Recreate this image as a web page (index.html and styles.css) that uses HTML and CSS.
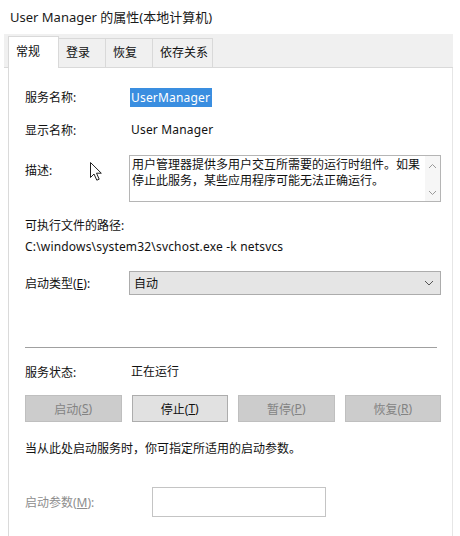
FILE: index.html
```html
<!DOCTYPE html>
<html lang="zh-CN">
<head>
<meta charset="utf-8">
<title>User Manager 的属性</title>
<link rel="stylesheet" href="styles.css">
</head>
<body>
<div class="title">User Manager 的属性(本地计算机)</div>
<div class="dialog">
  <div class="tabs">
    <div class="tab active t1">常规</div>
    <div class="tab t2">登录</div>
    <div class="tab t3">恢复</div>
    <div class="tab t4">依存关系</div>
  </div>
  <div class="panel">
    <div class="row r-name"><span class="label">服务名称:</span><span class="value latin"><span class="sel">UserManager</span></span></div>
    <div class="row r-disp"><span class="label">显示名称:</span><span class="value latin">User Manager</span></div>
    <div class="row r-desc">
      <span class="label desc-label">描述:</span>
      <div class="textbox">
        <div class="textbox-text">用户管理器提供多用户交互所需要的运行时组件。如果停止此服务，某些应用程序可能无法正确运行。</div>
        <div class="scroll">
          <svg width="9" height="6" viewBox="0 0 9 6"><path d="M1 5 L4.5 1.5 L8 5" fill="none" stroke="#9a9a9a" stroke-width="1"/></svg>
          <svg width="9" height="6" viewBox="0 0 9 6"><path d="M1 1 L4.5 4.5 L8 1" fill="none" stroke="#9a9a9a" stroke-width="1"/></svg>
        </div>
      </div>
      <svg class="cursor" width="14" height="21" viewBox="0 0 14 21"><path d="M1.5 1.5 L1.5 16.5 L5 13 L7.8 19.2 L10.2 18.2 L7.5 12.2 L12.3 12.2 Z" fill="#fff" stroke="#222" stroke-width="1" stroke-linejoin="round"/></svg>
    </div>
    <div class="line r-pathlabel">可执行文件的路径:</div>
    <div class="line r-path latin">C:\windows\system32\svchost.exe -k netsvcs</div>
    <div class="row r-type">
      <span class="label">启动类型(<u>E</u>):</span>
      <div class="combo">
        <span>自动</span>
        <svg width="10" height="6" viewBox="0 0 10 6"><path d="M1 1 L5 5 L9 1" fill="none" stroke="#555" stroke-width="1"/></svg>
      </div>
    </div>
    <div class="sep"></div>
    <div class="row r-status"><span class="label">服务状态:</span><span class="value">正在运行</span></div>
    <div class="buttons">
      <div class="btn disabled">启动(<u>S</u>)</div>
      <div class="btn">停止(<u>T</u>)</div>
      <div class="btn disabled">暂停(<u>P</u>)</div>
      <div class="btn disabled">恢复(<u>R</u>)</div>
    </div>
    <div class="line r-note">当从此处启动服务时，你可指定所适用的启动参数。</div>
    <div class="row r-param">
      <span class="label param-label">启动参数(<u>M</u>):</span>
      <div class="input"></div>
    </div>
  </div>
</div>
</body>
</html>
```

FILE: styles.css
```css
html, body {
  margin: 0;
  padding: 0;
  background: #ffffff;
}
body {
  width: 460px;
  height: 536px;
  overflow: hidden;
  font-family: "Noto Sans", "Noto Sans CJK SC", sans-serif;
  font-size: 12px;
  color: #111;
}
u {
  text-decoration: underline;
  text-underline-offset: 1px;
}
.latin {
  letter-spacing: 0.18px;
}
.title {
  height: 34px;
  line-height: 34px;
  padding-left: 10px;
  font-size: 13px;
  color: #1a1a1a;
}
.dialog {
  margin-left: 4px;
  width: 449px;
}
.tabs {
  height: 34px;
  box-sizing: border-box;
  background: #f0f0f0;
  border-bottom: 1px solid #d9d9d9;
  display: flex;
  align-items: flex-end;
  padding-left: 4px;
}
.tab {
  height: 29px;
  box-sizing: border-box;
  line-height: 27px;
  padding-left: 7px;
  border: 1px solid #d9d9d9;
  border-bottom: none;
  margin-left: -1px;
  background: #f0f0f0;
}
.tab.active {
  height: 32px;
  line-height: 29px;
  background: #ffffff;
  margin-bottom: -1px;
  margin-left: 0;
  position: relative;
  z-index: 1;
}
.t1 { width: 51px; }
.t2 { width: 48px; }
.t3 { width: 48px; }
.t4 { width: 61px; }
.panel {
  margin-left: 4px;
  height: 470px;
  box-sizing: border-box;
  border-left: 1px solid #dadada;
  border-right: 1px solid #e6e6e6;
  background: #ffffff;
  padding-left: 16px;
  padding-right: 10px;
  padding-top: 18px;
}
.row {
  display: flex;
  align-items: center;
}
.label {
  width: 106px;
  flex: none;
}
.value {
  line-height: 18px;
}
.sel {
  display: inline-block;
  background: #3a8ee0;
  color: #fff;
  padding: 0 2px 0 1px;
  margin-left: -1px;
  line-height: 19px;
}
.r-name { height: 22px; }
.r-disp { height: 22px; margin-top: 11px; }
.r-desc {
  margin-top: 14px;
  align-items: flex-start;
  position: relative;
}
.desc-label { padding-top: 6px; }
.textbox {
  width: 312px;
  height: 47px;
  box-sizing: border-box;
  border: 1px solid #b5b5b5;
  display: flex;
  margin-left: -2px;
}
.textbox-text {
  flex: 1;
  padding: 1px 0 0 2px;
  line-height: 16px;
}
.scroll {
  width: 15px;
  flex: none;
  background: #f6f6f6;
  display: flex;
  flex-direction: column;
  justify-content: space-between;
  align-items: center;
  padding: 7px 0 5px;
}
.scroll svg { display: block; }
.cursor {
  position: absolute;
  left: 64px;
  top: 6px;
}
.line {
  height: 18px;
  line-height: 18px;
}
.r-pathlabel { margin-top: 15px; }
.r-path { margin-top: 3px; }
.r-type { margin-top: 15px; }
.combo {
  width: 312px;
  height: 24px;
  box-sizing: border-box;
  margin-left: -2px;
  border: 1px solid #acacac;
  background: #e5e5e5;
  display: flex;
  align-items: center;
  justify-content: space-between;
  padding: 0 6px 0 4px;
}
.combo svg { display: block; }
.sep {
  margin-top: 52px;
  height: 1px;
  width: 412px;
  background: #a0a0a0;
}
.r-status { height: 18px; margin-top: 15px; }
.buttons {
  margin-top: 14px;
  width: 416px;
  display: grid;
  grid-template-columns: repeat(4, 1fr);
  column-gap: 10px;
}
.btn {
  height: 27px;
  box-sizing: border-box;
  border: 1px solid #adadad;
  background: #e1e1e1;
  display: flex;
  align-items: center;
  justify-content: center;
  color: #111;
}
.btn.disabled {
  background: #cccccc;
  border-color: #bfbfbf;
  color: #838383;
}
.r-note { margin-top: 18px; }
.r-param { margin-top: 29px; }
.param-label {
  width: 127px;
  color: #8d8d8d;
}
.input {
  width: 174px;
  height: 30px;
  box-sizing: border-box;
  border: 1px solid #c4c4c4;
  background: #fff;
}
```
